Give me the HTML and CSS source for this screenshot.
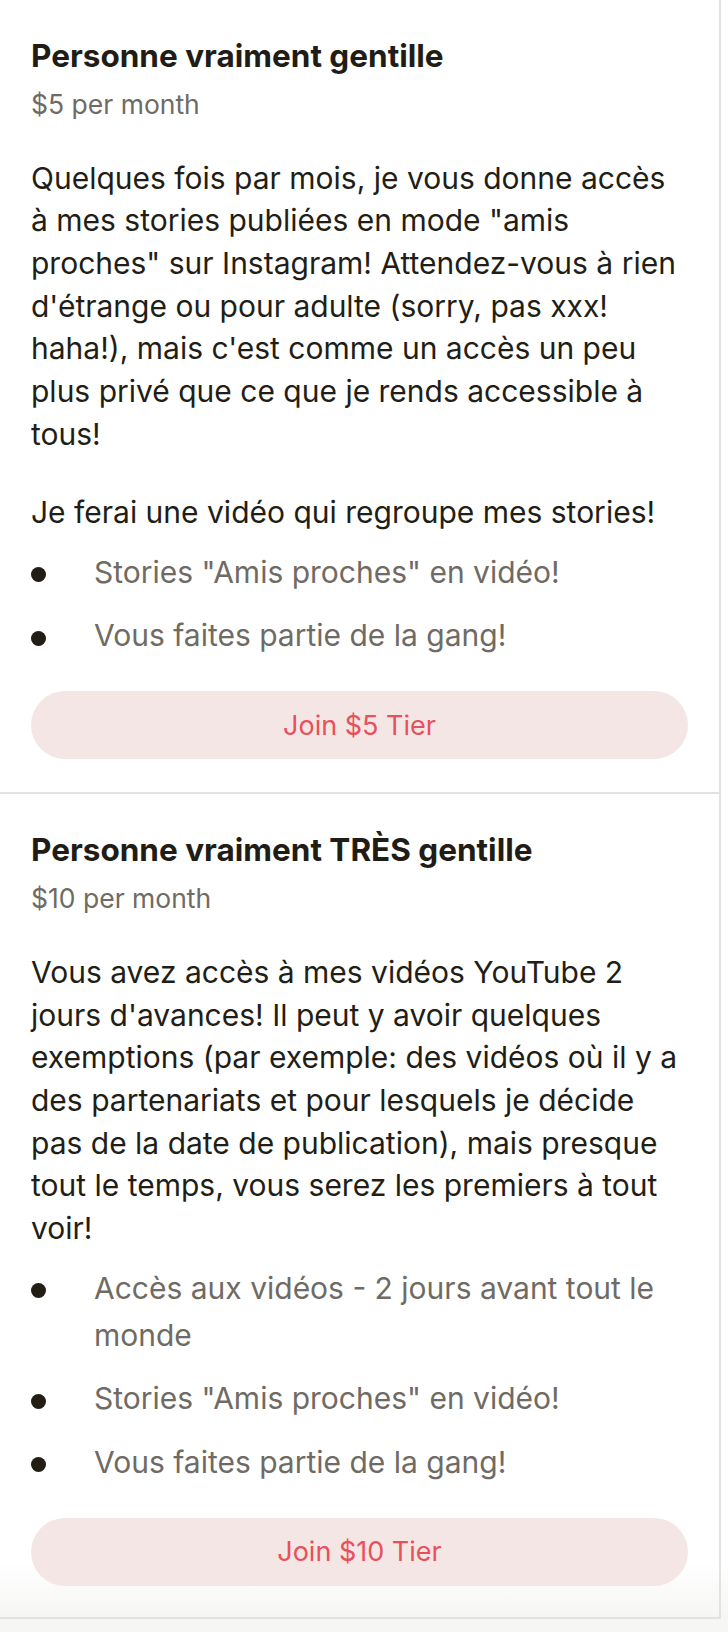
FILE: index.html
```html
<!DOCTYPE html>
<html lang="fr">
<head>
<meta charset="utf-8">
<title>Tiers</title>
<link rel="stylesheet" href="styles.css">
</head>
<body>
<main class="tiers">
  <section class="tier">
    <h2 class="tier-title">Personne vraiment gentille</h2>
    <div class="tier-price">$5 per month</div>
    <div class="tier-desc">
      <p>Quelques fois par mois, je vous donne accès à mes stories publiées en mode "amis proches" sur Instagram! Attendez-vous à rien d'étrange ou pour adulte (sorry, pas xxx! haha!), mais c'est comme un accès un peu plus privé que ce que je rends accessible à tous!</p>
      <p>Je ferai une vidéo qui regroupe mes stories!</p>
    </div>
    <ul class="benefits">
      <li>Stories "Amis proches" en vidéo!</li>
      <li>Vous faites partie de la gang!</li>
    </ul>
    <button class="join">Join $5 Tier</button>
  </section>
  <section class="tier tier-last">
    <h2 class="tier-title">Personne vraiment TRÈS gentille</h2>
    <div class="tier-price">$10 per month</div>
    <div class="tier-desc">
      <p>Vous avez accès à mes vidéos YouTube 2 jours d'avances! Il peut y avoir quelques exemptions (par exemple: des vidéos où il y a des partenariats et pour lesquels je décide pas de la date de publication), mais presque tout le temps, vous serez les premiers à tout voir!</p>
    </div>
    <ul class="benefits">
      <li>Accès aux vidéos - 2 jours avant tout le monde</li>
      <li>Stories "Amis proches" en vidéo!</li>
      <li>Vous faites partie de la gang!</li>
    </ul>
    <button class="join">Join $10 Tier</button>
  </section>
</main>
</body>
</html>
```
FILE: styles.css
```css
html, body {
  margin: 0;
  padding: 0;
  background: #f6f6f5;
}
body {
  font-family: Inter, "Liberation Sans", sans-serif;
  color: #221e16;
  min-height: 1632px;
  background: linear-gradient(#ffffff 0, #ffffff 1560px, #f6f6f5 1617px);
}
.tiers {
  width: 719px;
  border-right: 2px solid #e4e2dd;
  border-bottom: 2px solid #e4e2dd;
}
.tier {
  padding: 36px 31px 33px;
  border-bottom: 2px solid #e4e2dd;
}
.tier-last {
  border-bottom: none;
  padding-bottom: 31px;
}
.tier-title {
  margin: 0;
  font-size: 31.5px;
  line-height: 40px;
  font-weight: 700;
  color: #211d16;
}
.tier-price {
  margin-top: 10px;
  font-size: 26.5px;
  line-height: 36px;
  color: #6f6b64;
}
.tier-desc {
  margin-top: 34.6px;
  font-size: 30px;
  line-height: 42.67px;
}
.tier-desc p {
  margin: 0;
}
.tier-desc p + p {
  margin-top: 35.8px;
}
.benefits {
  list-style: none;
  margin: 15px 0 0;
  padding: 0;
  display: flex;
  flex-direction: column;
  gap: 16.5px;
}
.benefits li {
  position: relative;
  padding-left: 63px;
  font-size: 30px;
  line-height: 47px;
  color: #6f6b64;
}
.benefits li::before {
  content: "";
  position: absolute;
  left: 0;
  top: 18.5px;
  width: 15px;
  height: 15px;
  border-radius: 50%;
  background: #221e16;
}
.join {
  display: block;
  width: 100%;
  height: 68px;
  margin-top: 32px;
  border: none;
  border-radius: 34px;
  background: #f5e6e6;
  color: #e8505a;
  font-family: inherit;
  font-size: 27px;
  padding: 0;
}
```
